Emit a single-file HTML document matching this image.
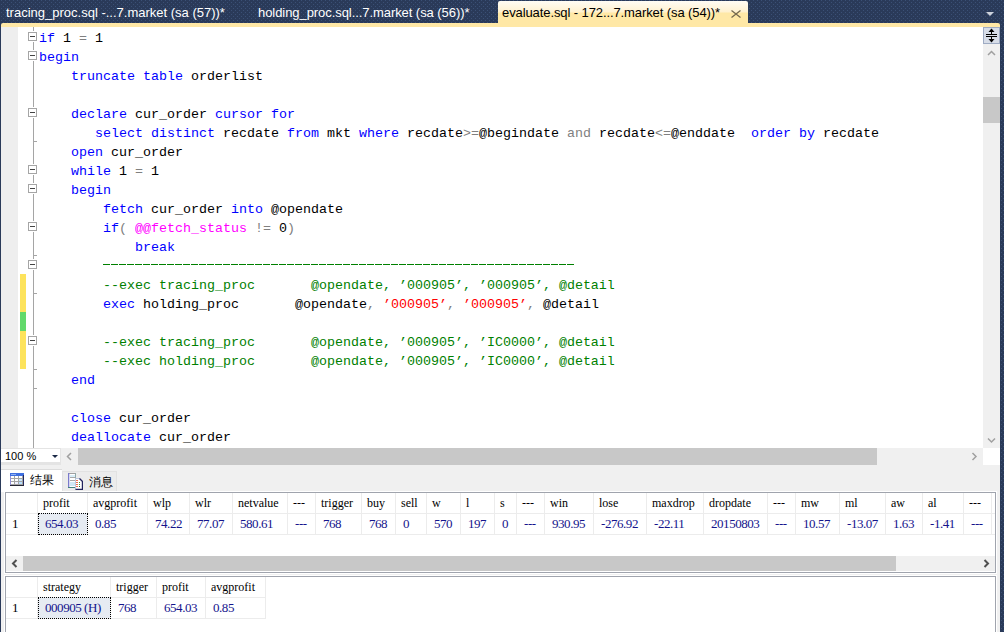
<!DOCTYPE html>
<html><head><meta charset="utf-8">
<style>
*{margin:0;padding:0;box-sizing:border-box}
html,body{width:1004px;height:632px;overflow:hidden}
body{background-color:#2a3a59;position:relative;font-family:"Liberation Sans",sans-serif}
.pat{background-color:#2a3a59;background-image:conic-gradient(from 270deg at 1px 1px,#3b5075 25%,transparent 0),conic-gradient(from 270deg at 1px 1px,#3b5075 25%,transparent 0);background-size:4px 4px;background-position:1px 0,3px 2px}
.abs{position:absolute}
.tab{position:absolute;top:1px;height:23px;font-size:13px;line-height:23px;color:#fff;white-space:pre}
.code{position:absolute;left:39px;top:29px;font-family:"Liberation Mono",monospace;font-size:13.333px;line-height:19px;white-space:pre}
.ln{height:19px}
.fold{position:absolute;left:28px;width:9px;height:9px;border:1px solid #a5a5a5;background:#fff;box-shadow:0 0 0 1px #fff}
.fold:after{content:"";position:absolute;left:1px;top:3px;width:5px;height:1px;background:#444}
.tick{position:absolute;left:33px;width:4px;height:1px;background:#a5a5a5}
.grid{position:absolute;left:5px;width:991px;background:#fff;border:1px solid #a0a4ad;overflow:hidden;box-shadow:0 0 0 1px #fff}
.hc,.dc{position:absolute;height:21px;font-family:"Liberation Serif",serif;font-size:12px;line-height:21px;padding-left:5px;white-space:pre;border-right:1px solid #ececec;border-bottom:1px solid #ececec;overflow:hidden}
.hc{top:0;height:21px}
.dc{color:#14148c;font-size:13px;letter-spacing:-0.45px;padding-left:7px;line-height:19px}
.rh{color:#000;padding-left:6px}
.sel{background:#e6ebf2;outline:1px dotted #000;outline-offset:-1px;margin-top:-1px;height:22px!important;padding-top:1px}
</style></head><body>
<div class="abs pat" style="left:0;top:0;width:1004px;height:632px"></div>
<!-- tabs -->
<div class="tab" style="left:6px">tracing_proc.sql -...7.market (sa (57))*</div>
<div class="tab" style="left:258px;letter-spacing:-0.065px">holding_proc.sql...7.market (sa (56))*</div>
<div class="abs" style="left:498px;top:1px;width:250px;height:22px;border-radius:2px 2px 0 0;background:linear-gradient(#fffcf5 0,#fff1cf 11px,#ffe8a6 12px,#ffe8a6 100%)"></div>
<div class="tab" style="left:502px;color:#000;letter-spacing:-0.095px">evaluate.sql - 172...7.market (sa (54))*</div>
<div class="abs" style="left:731px;top:10px;width:10px;height:8px">
<svg style="display:block" width="10" height="8" viewBox="0 0 10 8"><path d="M0.5 0.5L9.5 7.5M9.5 0.5L0.5 7.5" stroke="#75694f" stroke-width="1.3"/></svg></div>
<div class="abs" style="left:986px;top:12px;width:0;height:0;border-left:4px solid transparent;border-right:4px solid transparent;border-top:4px solid #cdd2dc"></div>
<!-- yellow strip -->
<div class="abs" style="left:1px;top:23px;width:999px;height:4px;background:#ffe8a6;border-radius:2px 2px 0 0"></div>
<!-- editor -->
<div class="abs" style="left:1px;top:27px;width:982px;height:421px;background:#fff"></div>
<div class="abs" style="left:1px;top:27px;width:17px;height:421px;background:#eeeeee"></div>
<div class="abs" style="left:33px;top:27px;width:1px;height:421px;background:#a5a5a5"></div>
<div class="abs" style="left:20px;top:274px;width:6px;height:95px;background:#fde35c"></div>
<div class="abs" style="left:20px;top:312px;width:6px;height:19px;background:#62d96b"></div>
<div class="fold" style="top:32px"></div><div class="fold" style="top:51px"></div><div class="fold" style="top:108px"></div><div class="fold" style="top:165px"></div><div class="fold" style="top:184px"></div><div class="fold" style="top:222px"></div><div class="fold" style="top:260px"></div><div class="fold" style="top:336px"></div><div class="tick" style="top:141px"></div><div class="tick" style="top:255px"></div><div class="tick" style="top:293px"></div><div class="tick" style="top:369px"></div><div class="tick" style="top:388px"></div>
<div class="abs" style="left:103px;top:264px;width:472px;height:1px;background:repeating-linear-gradient(90deg,#008000 0 7px,transparent 7px 8px)"></div>
<div class="code"><div class="ln"><span style="color:#0000ff">if</span><span style="color:#000000"> 1 </span><span style="color:#808080">=</span><span style="color:#000000"> 1</span></div><div class="ln"><span style="color:#0000ff">begin</span></div><div class="ln"><span style="color:#0000ff">    truncate table</span><span style="color:#000000"> orderlist</span></div><div class="ln"></div><div class="ln"><span style="color:#0000ff">    declare</span><span style="color:#000000"> cur_order </span><span style="color:#0000ff">cursor for</span></div><div class="ln"><span style="color:#0000ff">       select distinct</span><span style="color:#000000"> recdate </span><span style="color:#0000ff">from</span><span style="color:#000000"> mkt </span><span style="color:#0000ff">where</span><span style="color:#000000"> recdate</span><span style="color:#808080">&gt;=</span><span style="color:#000000">@begindate </span><span style="color:#808080">and</span><span style="color:#000000"> recdate</span><span style="color:#808080">&lt;=</span><span style="color:#000000">@enddate  </span><span style="color:#0000ff">order by</span><span style="color:#000000"> recdate</span></div><div class="ln"><span style="color:#0000ff">    open</span><span style="color:#000000"> cur_order</span></div><div class="ln"><span style="color:#0000ff">    while</span><span style="color:#000000"> 1 </span><span style="color:#808080">=</span><span style="color:#000000"> 1</span></div><div class="ln"><span style="color:#0000ff">    begin</span></div><div class="ln"><span style="color:#0000ff">        fetch</span><span style="color:#000000"> cur_order </span><span style="color:#0000ff">into</span><span style="color:#000000"> @opendate</span></div><div class="ln"><span style="color:#0000ff">        if</span><span style="color:#808080">( </span><span style="color:#ff00ff">@@fetch_status</span><span style="color:#808080"> != </span><span style="color:#000000">0</span><span style="color:#808080">)</span></div><div class="ln"><span style="color:#0000ff">            break</span></div><div class="ln"></div><div class="ln"><span style="color:#008000">        --exec tracing_proc       @opendate, ’000905’, ’000905’, @detail</span></div><div class="ln"><span style="color:#0000ff">        exec</span><span style="color:#000000"> holding_proc       @opendate</span><span style="color:#808080">, </span><span style="color:#ff0000">’000905’</span><span style="color:#808080">, </span><span style="color:#ff0000">’000905’</span><span style="color:#808080">, </span><span style="color:#000000">@detail</span></div><div class="ln"></div><div class="ln"><span style="color:#008000">        --exec tracing_proc       @opendate, ’000905’, ’IC0000’, @detail</span></div><div class="ln"><span style="color:#008000">        --exec holding_proc       @opendate, ’000905’, ’IC0000’, @detail</span></div><div class="ln"><span style="color:#0000ff">    end</span></div><div class="ln"></div><div class="ln"><span style="color:#0000ff">    close</span><span style="color:#000000"> cur_order</span></div><div class="ln"><span style="color:#0000ff">    deallocate</span><span style="color:#000000"> cur_order</span></div></div>
<!-- vscroll -->
<div class="abs" style="left:983px;top:27px;width:17px;height:421px;background:#f0f0f0"></div>
<div class="abs" style="left:983px;top:27px"><svg style="display:block" width="17" height="17" viewBox="0 0 17 17">
<rect x="0.5" y="0.5" width="16" height="16" fill="#d7dde8" stroke="#9eabc3"/>
<path d="M8.5 1.5 L11.5 5 L5.5 5 Z" fill="#000"/>
<rect x="8" y="4" width="1" height="3" fill="#000"/>
<rect x="3" y="7" width="11" height="1" fill="#000"/>
<rect x="3" y="9" width="11" height="1" fill="#000"/>
<rect x="8" y="10" width="1" height="3" fill="#000"/>
<path d="M8.5 15.5 L11.5 12 L5.5 12 Z" fill="#000"/>
</svg></div>
<div class="abs" style="left:987px;top:49px"><svg style="display:block" width="10" height="10" viewBox="0 0 10 10"><path d="M1 6 L4.5 2.5 L8 6" fill="none" stroke="#a0a0a0" stroke-width="1.5"/></svg></div>
<div class="abs" style="left:983px;top:97px;width:17px;height:26px;background:#c8c8c8"></div>
<div class="abs" style="left:987px;top:436px"><svg style="display:block" width="10" height="10" viewBox="0 0 10 10"><path d="M1 2.5 L4.5 6 L8 2.5" fill="none" stroke="#a0a0a0" stroke-width="1.5"/></svg></div>
<!-- hscroll -->
<div class="abs" style="left:1px;top:448px;width:982px;height:17px;background:#f0f0f0"></div>
<div class="abs" style="left:1px;top:448px;width:60px;height:17px;background:#e4e4e4"></div>
<div class="abs" style="left:1px;top:449px;width:59px;height:13px;background:#fff"></div>
<div class="abs" style="left:5px;top:449px;font-size:11px;line-height:15px;color:#000">100 %</div>
<div class="abs" style="left:52px;top:455px;width:0;height:0;border-left:3px solid transparent;border-right:3px solid transparent;border-top:3px solid #1b2946"></div>
<div class="abs" style="left:65px;top:452px"><svg style="display:block" width="10" height="10" viewBox="0 0 10 10"><path d="M6 1 L2.5 4.5 L6 8" fill="none" stroke="#a0a0a0" stroke-width="1.5"/></svg></div>
<div class="abs" style="left:78px;top:448px;width:799px;height:17px;background:#c8c8c8"></div>
<div class="abs" style="left:970px;top:452px"><svg style="display:block" width="10" height="10" viewBox="0 0 10 10"><path d="M2.5 1 L6 4.5 L2.5 8" fill="none" stroke="#a0a0a0" stroke-width="1.5"/></svg></div>
<div class="abs" style="left:983px;top:448px;width:17px;height:17px;background:#fff"></div>
<!-- results pane -->
<div class="abs" style="left:1px;top:465px;width:999px;height:167px;background:#f0f0f0"></div>
<div class="abs" style="left:1px;top:469px;width:61px;height:23px;background:#fff;border-top:1px solid #dcdcdc"></div>
<div class="abs" style="left:62px;top:471px;width:55px;height:20px;background:#ececec;border:1px solid #e2e2e2;border-bottom:none"></div>
<div class="abs" style="left:10px;top:473px"><svg style="display:block" width="14" height="13" viewBox="0 0 14 13">
<rect x="0" y="0" width="14" height="13" fill="#a4a4a4"/>
<rect x="0" y="0" width="14" height="3" fill="#3f6fe0"/>
<rect x="1" y="1" width="5" height="1" fill="#8fb0f0"/>
<rect x="0" y="3" width="1" height="10" fill="#9090d8"/>
<rect x="13" y="2" width="1" height="11" fill="#222a60"/>
<rect x="0" y="12" width="14" height="1" fill="#262636"/>
<rect x="1" y="3" width="3" height="2" fill="#fff"/><rect x="5" y="3" width="3" height="2" fill="#fff"/><rect x="9" y="3" width="3" height="2" fill="#fff"/>
<rect x="1" y="6" width="3" height="2" fill="#fff"/><rect x="5" y="6" width="3" height="2" fill="#fff"/><rect x="9" y="6" width="3" height="2" fill="#c8e8ff"/>
<rect x="1" y="9" width="3" height="2" fill="#fff"/><rect x="5" y="9" width="3" height="2" fill="#eef"/><rect x="9" y="9" width="3" height="2" fill="#b8e0ff"/>
</svg></div>
<div class="abs" style="left:68px;top:473px"><svg style="display:block" width="15" height="17" viewBox="0 0 15 17">
<rect x="0" y="0" width="8" height="15" fill="#fff"/>
<rect x="0" y="0" width="8" height="1" fill="#a0a0a0"/>
<rect x="7" y="0" width="1" height="6" fill="#90a8a8"/>
<rect x="0" y="0" width="1.3" height="15" fill="#7a7acc"/>
<rect x="0" y="14" width="8" height="1" fill="#408080"/>
<rect x="2" y="4" width="5" height="1" fill="#a8a8a8"/>
<rect x="2" y="7" width="5" height="1" fill="#a8a8a8"/>
<rect x="2" y="2" width="5" height="2" fill="#d8eef8"/>
<rect x="2" y="9" width="5" height="4" fill="#d0e8f6"/>
<path d="M7.5 5.5 L11.5 5.5 L14.5 8.5 L14.5 16.5 L7.5 16.5 Z" fill="#fff" stroke="#bcc8e0" stroke-width="1"/>
<path d="M11.5 5.5 L14.5 8.5 L14.5 16.5 L7.5 16.5" fill="none" stroke="#23235e" stroke-width="1.4"/>
<rect x="8" y="7" width="2" height="1" fill="#f07050"/><rect x="8" y="9" width="2" height="1" fill="#f07050"/><rect x="8" y="11" width="2" height="1" fill="#f07050"/><rect x="8" y="13" width="2" height="1" fill="#f07050"/>
<rect x="11" y="9" width="1" height="1" fill="#40a040"/><rect x="11" y="11" width="1" height="1" fill="#40a040"/><rect x="11" y="13" width="1" height="1" fill="#2a6a2a"/>
</svg></div>
<div class="abs" style="left:30px;top:472px;font-size:12px;line-height:16px">结果</div>
<div class="abs" style="left:89px;top:474px;font-size:12px;line-height:16px">消息</div>
<!-- grid1 -->
<div class="grid" style="top:492px;height:81px"><div class="hc" style="left:0px;top:0;width:32px"></div><div class="dc rh" style="left:0px;top:21px;width:32px">1</div><div class="hc" style="left:32px;top:0;width:50px">profit</div><div class="dc sel" style="left:32px;top:21px;width:50px">654.03</div><div class="hc" style="left:82px;top:0;width:60px">avgprofit</div><div class="dc" style="left:82px;top:21px;width:60px">0.85</div><div class="hc" style="left:142px;top:0;width:42px">wlp</div><div class="dc" style="left:142px;top:21px;width:42px">74.22</div><div class="hc" style="left:184px;top:0;width:43px">wlr</div><div class="dc" style="left:184px;top:21px;width:43px">77.07</div><div class="hc" style="left:227px;top:0;width:55px">netvalue</div><div class="dc" style="left:227px;top:21px;width:55px">580.61</div><div class="hc" style="left:282px;top:0;width:28px">---</div><div class="dc" style="left:282px;top:21px;width:28px">---</div><div class="hc" style="left:310px;top:0;width:46px">trigger</div><div class="dc" style="left:310px;top:21px;width:46px">768</div><div class="hc" style="left:356px;top:0;width:34px">buy</div><div class="dc" style="left:356px;top:21px;width:34px">768</div><div class="hc" style="left:390px;top:0;width:31px">sell</div><div class="dc" style="left:390px;top:21px;width:31px">0</div><div class="hc" style="left:421px;top:0;width:34px">w</div><div class="dc" style="left:421px;top:21px;width:34px">570</div><div class="hc" style="left:455px;top:0;width:34px">l</div><div class="dc" style="left:455px;top:21px;width:34px">197</div><div class="hc" style="left:489px;top:0;width:22px">s</div><div class="dc" style="left:489px;top:21px;width:22px">0</div><div class="hc" style="left:511px;top:0;width:28px">---</div><div class="dc" style="left:511px;top:21px;width:28px">---</div><div class="hc" style="left:539px;top:0;width:49px">win</div><div class="dc" style="left:539px;top:21px;width:49px">930.95</div><div class="hc" style="left:588px;top:0;width:53px">lose</div><div class="dc" style="left:588px;top:21px;width:53px">-276.92</div><div class="hc" style="left:641px;top:0;width:57px">maxdrop</div><div class="dc" style="left:641px;top:21px;width:57px">-22.11</div><div class="hc" style="left:698px;top:0;width:64px">dropdate</div><div class="dc" style="left:698px;top:21px;width:64px">20150803</div><div class="hc" style="left:762px;top:0;width:28px">---</div><div class="dc" style="left:762px;top:21px;width:28px">---</div><div class="hc" style="left:790px;top:0;width:44px">mw</div><div class="dc" style="left:790px;top:21px;width:44px">10.57</div><div class="hc" style="left:834px;top:0;width:46px">ml</div><div class="dc" style="left:834px;top:21px;width:46px">-13.07</div><div class="hc" style="left:880px;top:0;width:37px">aw</div><div class="dc" style="left:880px;top:21px;width:37px">1.63</div><div class="hc" style="left:917px;top:0;width:41px">al</div><div class="dc" style="left:917px;top:21px;width:41px">-1.41</div><div class="hc" style="left:958px;top:0;width:28px">---</div><div class="dc" style="left:958px;top:21px;width:28px">---</div><div class="hc" style="left:986px;top:0;width:39px"></div><div class="dc" style="left:986px;top:21px;width:39px"></div>
<div class="abs" style="left:0;top:63px;width:989px;height:15px;background:#f0f0f0"></div>
<div class="abs" style="left:17px;top:63px;width:873px;height:15px;background:#c8c8c8"></div>
<div class="abs" style="left:4px;top:65px"><svg style="display:block" width="10" height="10" viewBox="0 0 10 10"><path d="M6.5 2 L3 5.5 L6.5 9" fill="none" stroke="#505050" stroke-width="2"/></svg></div>
<div class="abs" style="left:976px;top:65px"><svg style="display:block" width="10" height="10" viewBox="0 0 10 10"><path d="M2.5 2 L6 5.5 L2.5 9" fill="none" stroke="#505050" stroke-width="2"/></svg></div>
</div>
<!-- grid2 -->
<div class="grid" style="top:576px;height:60px"><div class="hc" style="left:0px;top:0;width:32px"></div><div class="dc rh" style="left:0px;top:21px;width:32px">1</div><div class="hc" style="left:32px;top:0;width:73px">strategy</div><div class="dc sel" style="left:32px;top:21px;width:73px">000905 (H)</div><div class="hc" style="left:105px;top:0;width:46px">trigger</div><div class="dc" style="left:105px;top:21px;width:46px">768</div><div class="hc" style="left:151px;top:0;width:49px">profit</div><div class="dc" style="left:151px;top:21px;width:49px">654.03</div><div class="hc" style="left:200px;top:0;width:60px">avgprofit</div><div class="dc" style="left:200px;top:21px;width:60px">0.85</div></div>
<!-- right border -->
<div class="abs pat" style="left:1000px;top:0;width:4px;height:632px"></div>
<div class="abs pat" style="left:0;top:23px;width:1px;height:609px"></div>
</body></html>
